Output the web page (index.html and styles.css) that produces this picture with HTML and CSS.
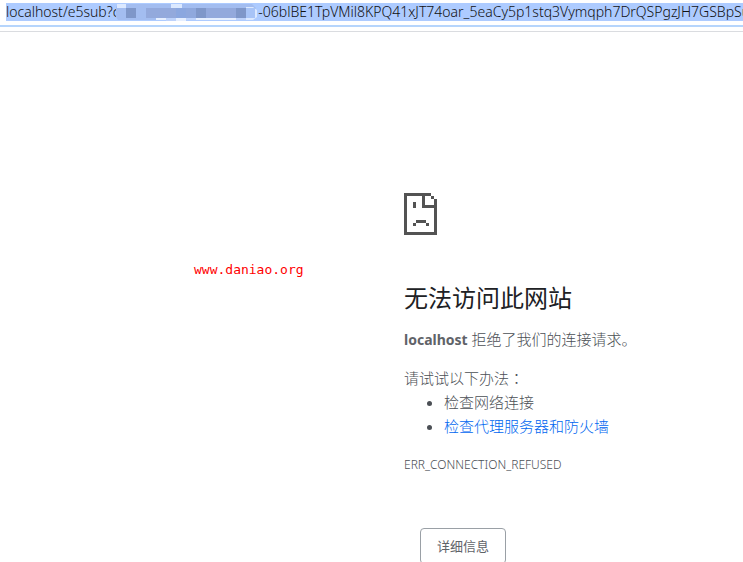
FILE: index.html
```html
<!DOCTYPE html>
<html lang="zh-CN">
<head>
<meta charset="utf-8">
<title>localhost</title>
<link rel="stylesheet" href="styles.css">
</head>
<body>
<header class="toolbar">
  <div class="address">
    <label class="address-host" for="url">localhost/e5sub?c</label>
    <svg class="mosaic" width="142" height="18" viewBox="4 0 142 18" aria-hidden="true">
      <path fill="#a3bdf0" d="M6 1H140L144 5V13L140 17H6L4 14V4Z"/>
      <path fill="#dce9ff" d="M5 1h9v4H5zM59 1h11v4H59zM134 4h7l4 3v7l-4 3h-7z"/>
      <path fill="#7f97c9" d="M14 5h10v10H14zM84 5h10v10H84zM124 5h10v10h-10z"/>
      <path fill="#93a9dc" d="M34 5h30v10H34zM94 5h30v10H94z"/>
      <path fill="#8ba7df" d="M64 5h10v10H64z"/>
      <path fill="#8fa8dd" d="M74 5h10v10H74z"/>
      <path fill="#a8c4f7" d="M134 5h9v10h-9z"/>
      <path fill="#e6efff" d="M44 15h10v2H44zM64 15h10v3H64zM84 15h40v2H84z"/>
      <path fill="#bdd2fb" d="M54 15h10v3H54zM74 15h10v2H74zM124 15h10v2h-10z"/>
    </svg>
    <input class="address-query" id="url" type="text" spellcheck="false" value="-06blBE1TpVMil8KPQ41xJT74oar_5eaCy5p1stq3Vymqph7DrQSPgzJH7GSBpSuf">
  </div>
</header>
<div class="page">
  <aside class="watermark">www.daniao.org</aside>
  <main class="error">
    <svg class="error-icon" width="33" height="42" viewBox="0 0 33 42" shape-rendering="crispEdges" aria-hidden="true">
      <path fill="#535353" d="M0 0H27V3H21V12H33V42H0ZM3 3V39H30V15H18V3ZM27 3h3v3h-3zM30 6h3v6h-3zM9 9h3v6H9zM12 27h10v3H12zM9 30h3v3H9zM22 30h3v3h-3z" fill-rule="evenodd"/>
    </svg>
    <h1 class="error-title">无法访问此网站</h1>
    <p class="error-summary"><strong>localhost</strong> 拒绝了我们的连接请求。</p>
    <p class="error-hint">请试试以下办法<span class="colon" lang="zh-TW">：</span></p>
    <ul class="error-list">
      <li>检查网络连接</li>
      <li><a href="#details">检查代理服务器和防火墙</a></li>
    </ul>
    <p class="error-code">ERR_CONNECTION_REFUSED</p>
    <button class="details-button" id="details" type="button">详细信息</button>
  </main>
</div>
</body>
</html>
```
FILE: styles.css
```css
* {
  box-sizing: border-box;
}

body {
  margin: 0;
  background: #fff;
  color: #4b4f55;
  font: 300 15px/24px "Noto Sans", "Noto Sans CJK SC", sans-serif;
  overflow: hidden;
}

.toolbar {
  padding-top: 3px;
  border-bottom: 1px solid #dadce0;
}

.address {
  display: flex;
  height: 24px;
  margin-bottom: 4px;
  padding-left: 6px;
  border-bottom: 2px solid #b6d5fc;
  color: #111;
  font-size: 14px;
  line-height: 18px;
  white-space: nowrap;
}

.address > * {
  height: 18px;
  background: #adcbff;
}

.address > .mosaic {
  flex: none;
  margin-left: -3px;
}

.address-query {
  flex: 1;
  min-width: 0;
  padding: 0;
  border: 0;
  outline: 0;
  color: inherit;
  font: inherit;
}

.page {
  display: grid;
  grid-template-columns: 404px 1fr;
}

.watermark {
  padding: 226px 0 0 194px;
  color: #f00;
  font: 13px/24px "DejaVu Sans Mono", monospace;
}

.error {
  padding-top: 161px;
}

.error-icon {
  display: block;
}

.error-title {
  margin: 45px 0 11px;
  color: #202124;
  font-size: 24px;
  font-weight: 400;
  line-height: 36px;
}

.error-summary {
  margin: 0 0 14px;
}

.error-summary strong {
  color: #5f6368;
  font-size: 14px;
  font-weight: 700;
}

.error-hint {
  margin: 0;
}

.colon {
  font-family: "Noto Sans CJK TC", sans-serif;
  line-height: 1;
}

.error-list {
  margin: 0;
  padding-left: 40px;
}

.error-list a {
  color: #0066f0;
  text-decoration: none;
}

.error-code {
  margin: 15px 0 51px;
  font-size: 12px;
}

.details-button {
  height: 36px;
  margin-left: 16px;
  padding: 0 16px;
  border: 1px solid #9aa0a6;
  border-radius: 4px;
  background: #fff;
  color: #5f6368;
  font: 13px/24px "Noto Sans", "Noto Sans CJK SC", sans-serif;
}
```
